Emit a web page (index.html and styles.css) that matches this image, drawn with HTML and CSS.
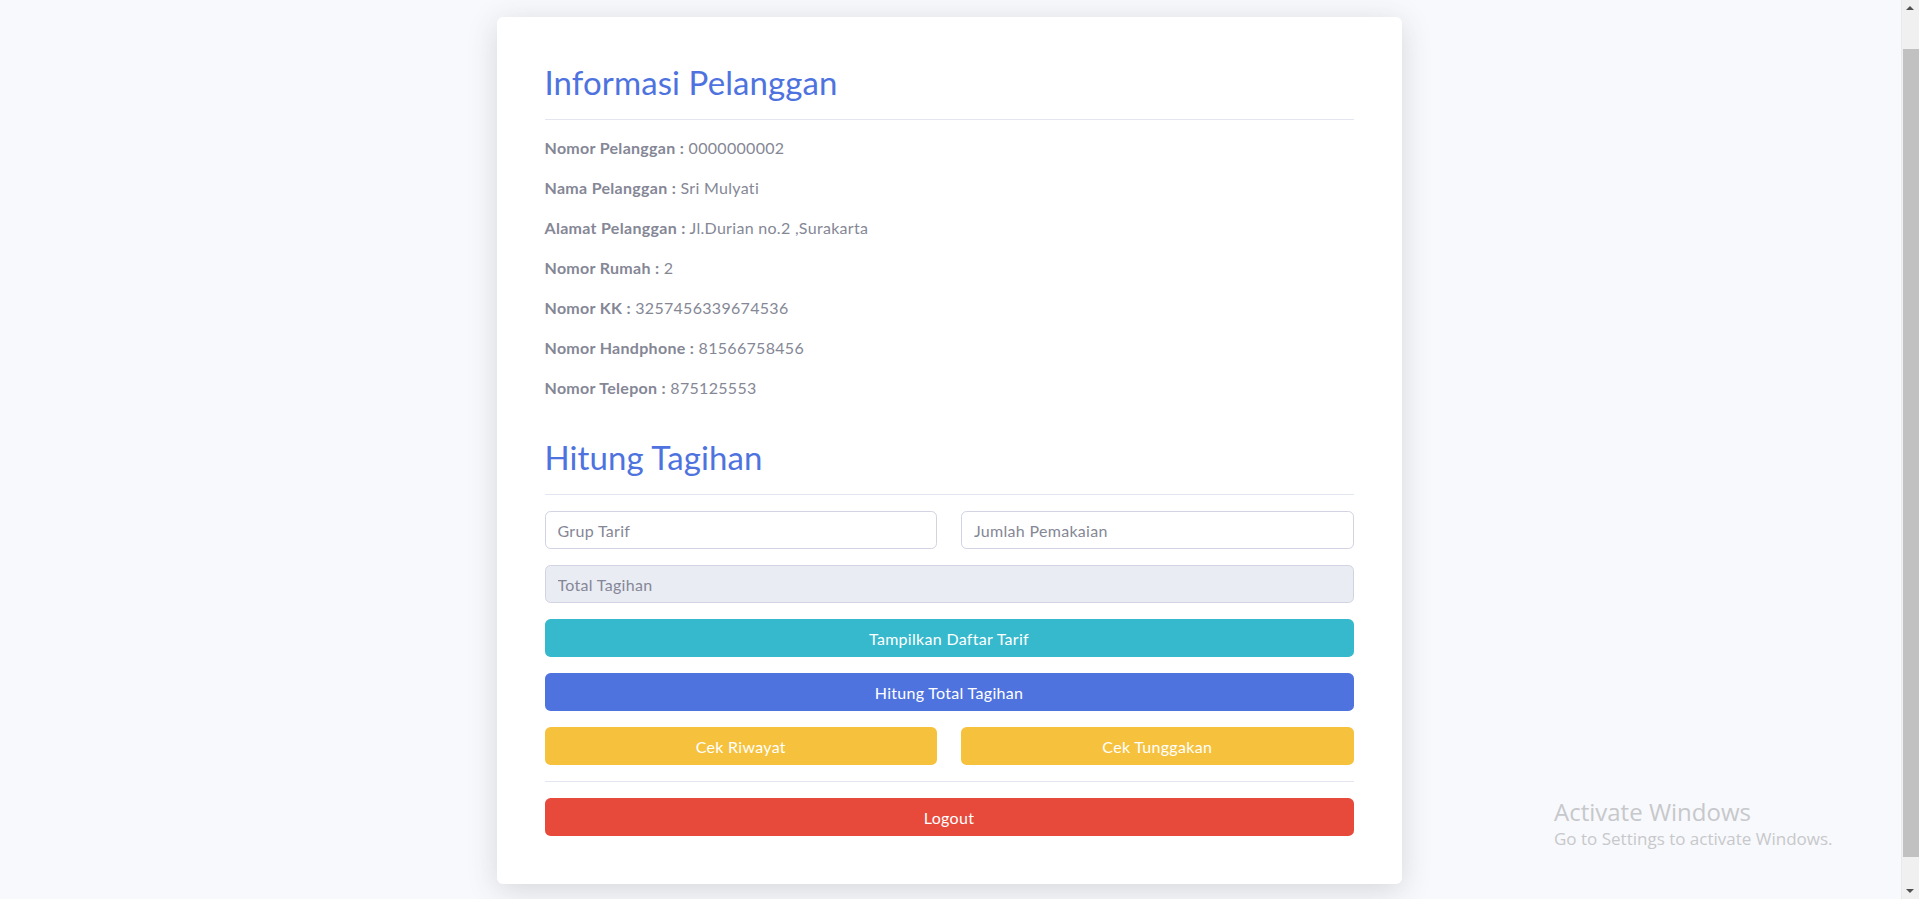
FILE: index.html
```html
<!DOCTYPE html>
<html lang="id">
<head>
<meta charset="utf-8">
<title>Informasi Pelanggan</title>
<link rel="stylesheet" href="styles.css">
</head>
<body>
<div class="page">
  <div class="card">
    <h1 class="title">Informasi Pelanggan</h1>
    <hr class="divider">
    <p class="row"><b>Nomor Pelanggan :</b> 0000000002</p>
    <p class="row"><b>Nama Pelanggan :</b> Sri Mulyati</p>
    <p class="row"><b>Alamat Pelanggan :</b> Jl.Durian no.2 ,Surakarta</p>
    <p class="row"><b>Nomor Rumah :</b> 2</p>
    <p class="row"><b>Nomor KK :</b> 3257456339674536</p>
    <p class="row"><b>Nomor Handphone :</b> 81566758456</p>
    <p class="row"><b>Nomor Telepon :</b> 875125553</p>

    <h2 class="title title-second">Hitung Tagihan</h2>
    <hr class="divider">
    <div class="form">
      <div class="pair">
        <input class="field" type="text" placeholder="Grup Tarif">
        <input class="field" type="text" placeholder="Jumlah Pemakaian">
      </div>
      <input class="field field-disabled" type="text" placeholder="Total Tagihan" disabled>
      <button class="btn btn-info">Tampilkan Daftar Tarif</button>
      <button class="btn btn-primary">Hitung Total Tagihan</button>
      <div class="pair">
        <button class="btn btn-warning">Cek Riwayat</button>
        <button class="btn btn-warning">Cek Tunggakan</button>
      </div>
    </div>
    <hr class="divider divider-bottom">
    <button class="btn btn-danger">Logout</button>
  </div>
</div>
<div class="scrollbar">
  <div class="sb-arrow sb-up"></div>
  <div class="sb-track"><div class="sb-thumb"></div></div>
  <div class="sb-arrow sb-down"></div>
</div>
<div class="watermark">
  <div class="wm-title">Activate Windows</div>
  <div class="wm-sub">Go to Settings to activate Windows.</div>
</div>
</body>
</html>
```
FILE: styles.css
```css
html, body {
  margin: 0;
  padding: 0;
}
body {
  display: flex;
  height: 899px;
  overflow: hidden;
  background: #f8f9fc;
  font-family: Lato, "Noto Sans", sans-serif;
  color: #858796;
}
.page {
  flex: 1;
  display: flex;
  justify-content: center;
  align-items: flex-start;
  padding-top: 17px;
}
.card {
  box-sizing: border-box;
  width: 905px;
  margin-right: 3px;
  padding: 48px;
  background: #fff;
  border-radius: 6px;
  box-shadow: 0 6px 30px 0 rgba(58, 59, 69, 0.18);
}
.title {
  margin: 0;
  font-size: 33px;
  line-height: 34px;
  font-weight: 400;
  letter-spacing: 0.1px;
  color: #4e73df;
}
.title-second {
  margin-top: 40px;
}
.divider {
  margin: 20px 0 16px;
  border: 0;
  border-top: 1px solid #e3e6f0;
}
.divider-bottom {
  margin: 16px 0;
}
.row {
  margin: 0 0 16px;
  font-size: 16px;
  line-height: 24px;
  letter-spacing: 0.3px;
}
.row b {
  font-weight: 700;
}
.form {
  display: flex;
  flex-direction: column;
  gap: 16px;
}
.pair {
  display: grid;
  grid-template-columns: 1fr 1fr;
  gap: 24px;
}
.field {
  box-sizing: border-box;
  height: 38px;
  width: 100%;
  padding: 6px 12px;
  border: 1px solid #d1d3e2;
  border-radius: 5.6px;
  background: #fff;
  font-family: inherit;
  font-size: 16px;
  letter-spacing: 0.3px;
  color: #6e707e;
  outline: none;
}
.field::placeholder {
  color: #858796;
}
.field-disabled {
  background: #eaecf4;
}
.btn {
  display: block;
  box-sizing: border-box;
  width: 100%;
  height: 38px;
  border: 1px solid transparent;
  border-radius: 5.6px;
  font-family: inherit;
  font-size: 16px;
  letter-spacing: 0.3px;
  color: #fff;
  cursor: pointer;
}
.btn-info { background: #36b9cc; }
.btn-primary { background: #4e73df; }
.btn-warning { background: #f6c23e; }
.btn-danger { background: #e74a3b; }

.scrollbar {
  width: 17px;
  display: flex;
  flex-direction: column;
  background: #f0f0f0;
  border-left: 1px solid #e9e9e9;
}
.sb-arrow {
  height: 17px;
  position: relative;
}
.sb-up::after, .sb-down::after {
  content: "";
  position: absolute;
  left: 4px;
  width: 0;
  height: 0;
  border-left: 4px solid transparent;
  border-right: 4px solid transparent;
}
.sb-up::after {
  top: 6px;
  border-bottom: 4px solid #505050;
}
.sb-down::after {
  top: 7px;
  border-top: 4px solid #505050;
}
.sb-track {
  flex: 1;
  padding: 32px 0 25px 1px;
}
.sb-thumb {
  height: 100%;
  background: #c1c1c1;
}
.watermark {
  position: absolute;
  left: 1554px;
  top: 797px;
  font-family: "Open Sans", "Noto Sans", sans-serif;
  color: #c7c8cb;
}
.wm-title {
  font-size: 24px;
  line-height: 30px;
}
.wm-sub {
  font-size: 17px;
  line-height: 24px;
}
```
